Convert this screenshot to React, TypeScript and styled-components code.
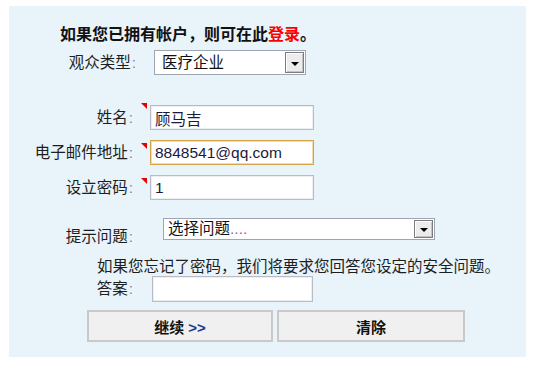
import React from "react";
import styled, { createGlobalStyle } from "styled-components";

const GlobalStyle = createGlobalStyle`
  body {
    margin: 0;
    background: #ffffff;
  }
`;

const Panel = styled.div`
  margin: 6px 0 0 9px;
  width: 517px;
  height: 351px;
  box-sizing: border-box;
  padding-top: 19px;
  background: #e8f3fa;
  display: flex;
  flex-direction: column;
  font-family: "Liberation Sans", "Noto Sans CJK SC", sans-serif;
  font-size: 15.5px;
  color: #1e1e1e;
`;

const Title = styled.div`
  margin-left: 51px;
  line-height: 20px;
  font-size: 16px;
  font-weight: bold;
  color: #111;
`;

const LoginLink = styled.a`
  color: #ff0000;
  text-decoration: none;
`;

const Row = styled.div<{ $top: number; $align?: string }>`
  display: flex;
  align-items: ${(p) => p.$align || "center"};
  margin-top: ${(p) => p.$top}px;
`;

const Label = styled.div<{ $width?: number; $drop?: number }>`
  flex: none;
  width: ${(p) => p.$width || 124}px;
  text-align: right;
  line-height: 20px;
  white-space: nowrap;
  margin-top: ${(p) => p.$drop || 0}px;
`;

const Colon = styled.span`
  color: #8a80b0;
  margin-left: 1px;
`;

const Marker = styled.span<{ $offset: number }>`
  flex: none;
  align-self: flex-start;
  width: 0;
  height: 0;
  margin: ${(p) => p.$offset}px 3px 0 8px;
  border-top: 6px solid #e60000;
  border-left: 6px solid transparent;
`;

const TextInput = styled.input<{ $gap?: number; $width?: number; $height?: number; $focus?: boolean }>`
  flex: none;
  box-sizing: border-box;
  margin: 0 0 0 ${(p) => p.$gap || 0}px;
  width: ${(p) => p.$width || 164}px;
  height: ${(p) => p.$height || 25}px;
  padding: 0 4px;
  background: #ffffff;
  border: 1px solid ${(p) => (p.$focus ? "#d6a24a" : "#b9bcc6")};
  box-shadow: ${(p) => (p.$focus ? "inset 0 0 0 1px #f2dcae" : "inset 0 0 0 1px #eceef2")};
  outline: none;
  font-family: "Liberation Sans", "Noto Sans CJK SC", sans-serif;
  font-size: 15.5px;
  color: #1a1a3c;
`;

const SelectBox = styled.div<{ $gap: number; $width: number; $height: number }>`
  flex: none;
  box-sizing: border-box;
  display: flex;
  align-items: stretch;
  margin-left: ${(p) => p.$gap}px;
  width: ${(p) => p.$width}px;
  height: ${(p) => p.$height}px;
  padding: 1px;
  background: #ffffff;
  border: 1px solid #9ea6b4;
`;

const SelectText = styled.div<{ $pad: number }>`
  flex: 1;
  padding-left: ${(p) => p.$pad}px;
  display: flex;
  align-items: center;
  line-height: 18px;
  color: #111;
`;

const Dots = styled.span`
  color: #a45aa8;
`;

const ArrowButton = styled.div`
  flex: none;
  width: 19px;
  box-sizing: border-box;
  display: flex;
  align-items: center;
  justify-content: center;
  padding-top: 2px;
  background: #ececec;
  border: 1px solid #7c7c7c;
  box-shadow: inset 1px 1px 0 #ffffff, inset -1px -1px 0 #c4c4c4;
`;

const Arrow = styled.span`
  width: 0;
  height: 0;
  border-left: 4px solid transparent;
  border-right: 4px solid transparent;
  border-top: 4px solid #000;
`;

const Hint = styled.div`
  margin: 11px 0 0 88px;
  line-height: 18px;
  white-space: nowrap;
  color: #1e1e1e;
`;

const ButtonRow = styled.div`
  display: flex;
  gap: 4px;
  margin: 8px 0 0 78px;
`;

const ActionButton = styled.button<{ $width: number }>`
  box-sizing: border-box;
  width: ${(p) => p.$width}px;
  height: 32px;
  padding: 0;
  background: #f0f0f0;
  border: 2px solid #c9c9c9;
  font-family: "Liberation Sans", "Noto Sans CJK SC", sans-serif;
  font-size: 15px;
  font-weight: bold;
  color: #111;
`;

const Chevrons = styled.span`
  color: #1d3a8a;
  margin-left: 4px;
`;

type SelectProps = {
  gap: number;
  width: number;
  height: number;
  pad: number;
  children: React.ReactNode;
};

const FakeSelect = ({ gap, width, height, pad, children }: SelectProps) => (
  <SelectBox $gap={gap} $width={width} $height={height}>
    <SelectText $pad={pad}>{children}</SelectText>
    <ArrowButton>
      <Arrow />
    </ArrowButton>
  </SelectBox>
);

export default function App() {
  return (
    <>
      <GlobalStyle />
      <Panel>
        <Title>
          如果您已拥有帐户，则可在此<LoginLink href="#">登录</LoginLink>。
        </Title>

        <Row $top={5}>
          <Label $width={127}>
            观众类型<Colon>:</Colon>
          </Label>
          <FakeSelect gap={18} width={152} height={25} pad={6}>
            医疗企业
          </FakeSelect>
        </Row>

        <Row $top={30}>
          <Label>
            姓名<Colon>:</Colon>
          </Label>
          <Marker $offset={-2} />
          <TextInput defaultValue="顾马吉" />
        </Row>

        <Row $top={10}>
          <Label>
            电子邮件地址<Colon>:</Colon>
          </Label>
          <Marker $offset={3} />
          <TextInput defaultValue="8848541@qq.com" $focus />
        </Row>

        <Row $top={10}>
          <Label>
            设立密码<Colon>:</Colon>
          </Label>
          <Marker $offset={3} />
          <TextInput defaultValue="1" />
        </Row>

        <Row $top={18} $align="flex-start">
          <Label $drop={9}>
            提示问题<Colon>:</Colon>
          </Label>
          <FakeSelect gap={30} width={272} height={22} pad={3}>
            选择问题<Dots>....</Dots>
          </FakeSelect>
        </Row>

        <Hint>如果您忘记了密码，我们将要求您回答您设定的安全问题。</Hint>

        <Row $top={0}>
          <Label>
            答案<Colon>:</Colon>
          </Label>
          <TextInput $gap={19} $width={161} $height={26} />
        </Row>

        <ButtonRow>
          <ActionButton $width={186}>
            继续<Chevrons>&gt;&gt;</Chevrons>
          </ActionButton>
          <ActionButton $width={188}>清除</ActionButton>
        </ButtonRow>
      </Panel>
    </>
  );
}
